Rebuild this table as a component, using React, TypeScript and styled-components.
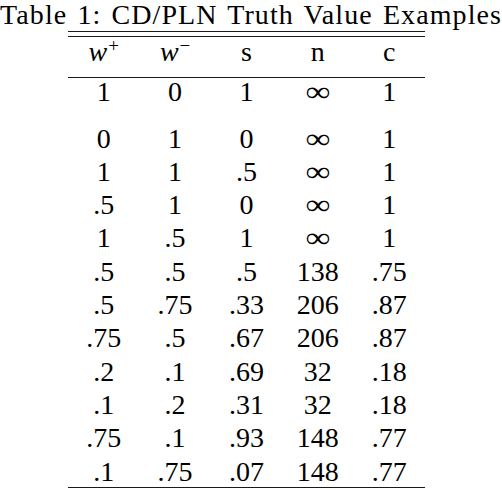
import * as React from "react";
import styled, { createGlobalStyle } from "styled-components";

const GlobalStyle = createGlobalStyle`
  html, body {
    margin: 0;
    padding: 0;
    background: #ffffff;
  }
  body {
    font-family: "Liberation Serif", "Times New Roman", serif;
    color: #000000;
  }
`;

const Page = styled.div`
  width: 502px;
  display: flex;
  flex-direction: column;
`;

const Caption = styled.div`
  font-size: 28px;
  line-height: 30px;
  height: 30px;
  text-align: center;
  white-space: nowrap;
  letter-spacing: 1.1px;
  word-spacing: 2px;
`;

const Table = styled.div`
  margin-left: 68px;
  margin-top: 1px;
  width: 357px;
  display: flex;
  flex-direction: column;
`;

const Rule: any = styled.div`
  height: ${(props: any) => props.$thick || 1}px;
  background: #1a1a1a;
  margin-top: ${(props: any) => props.$gap || 0}px;
`;

const Row: any = styled.div`
  display: grid;
  grid-template-columns: repeat(5, 71.4px);
  font-size: 28px;
  line-height: ${(props: any) => props.$lineHeight || 33.33}px;
  padding-bottom: ${(props: any) => props.$padBottom || 0}px;
`;

const Cell = styled.div`
  text-align: center;
  white-space: nowrap;
`;

const MathVar = styled.span`
  font-style: italic;
`;

const Sup = styled.span`
  font-size: 19px;
  line-height: 0;
  position: relative;
  top: -9px;
  margin-left: 1px;
`;

const InfinitySign = styled.span`
  display: inline-block;
  line-height: 0;
  transform: scaleX(1.25);
`;

const ROWS = [
  ["1", "0", "1", "∞", "1"],
  ["0", "1", "0", "∞", "1"],
  ["1", "1", ".5", "∞", "1"],
  [".5", "1", "0", "∞", "1"],
  ["1", ".5", "1", "∞", "1"],
  [".5", ".5", ".5", "138", ".75"],
  [".5", ".75", ".33", "206", ".87"],
  [".75", ".5", ".67", "206", ".87"],
  [".2", ".1", ".69", "32", ".18"],
  [".1", ".2", ".31", "32", ".18"],
  [".75", ".1", ".93", "148", ".77"],
  [".1", ".75", ".07", "148", ".77"]
];

const renderValue = (value: string) =>
  value === "∞" ? <InfinitySign>∞</InfinitySign> : value;

export default function App() {
  return (
    <Page>
      <GlobalStyle />
      <Caption>Table 1: CD/PLN Truth Value Examples</Caption>
      <Table>
        <Rule />
        <Rule $gap={3.5} />
        <Row $lineHeight={30} $padBottom={10}>
          <Cell>
            <MathVar>w</MathVar>
            <Sup>+</Sup>
          </Cell>
          <Cell>
            <MathVar>w</MathVar>
            <Sup>−</Sup>
          </Cell>
          <Cell>s</Cell>
          <Cell>n</Cell>
          <Cell>c</Cell>
        </Row>
        <Rule />
        {ROWS.map((row, i) => (
          <Row
            key={i}
            $lineHeight={i === 0 ? 28 : 33.33}
            $padBottom={i === 0 ? 16 : 0}
          >
            {row.map((value, j) => (
              <Cell key={j}>{renderValue(value)}</Cell>
            ))}
          </Row>
        ))}
        <Rule $thick={1.3} $gap={-1.5} />
      </Table>
    </Page>
  );
}
